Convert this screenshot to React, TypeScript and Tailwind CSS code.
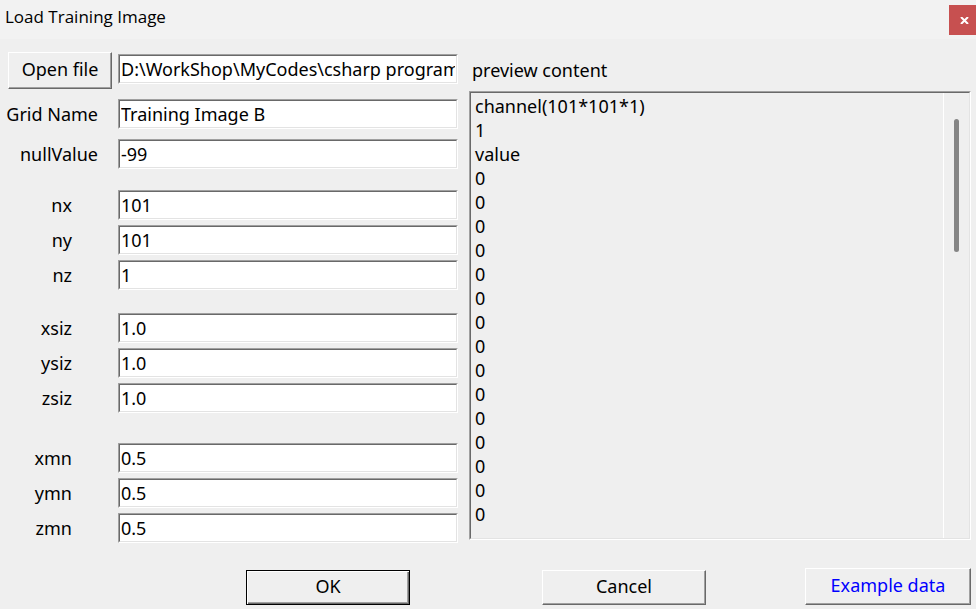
import type { ReactNode } from "react";

const RAISED =
  "border border-t-white border-l-white border-r-[#696969] border-b-[#696969] pb-[3px] shadow-[inset_-1px_-1px_0_#a0a0a0]";
const SUNKEN =
  "border border-t-[#a0a0a0] border-l-[#a0a0a0] border-r-white border-b-white";

type FieldProps = {
  id: string;
  label: string;
  value: string;
  wide?: boolean;
};

function TextBox({ id, value, label }: { id: string; value: string; label?: string }) {
  return (
    <span className={`block h-[30px] min-w-0 flex-1 ${SUNKEN}`}>
      <input
        id={id}
        aria-label={label}
        defaultValue={value}
        className="block h-full w-full border border-t-[#696969] border-r-[#e3e3e3] border-b-[#e3e3e3] border-l-[#696969] bg-white px-px outline-none"
      />
    </span>
  );
}

function Field({ id, label, value, wide }: FieldProps) {
  return (
    <div className="flex items-center">
      <label
        htmlFor={id}
        className={`w-[118px] shrink-0 text-right ${wide ? "pr-5" : "pr-[46px]"}`}
      >
        {label}
      </label>
      <TextBox id={id} value={value} />
    </div>
  );
}

function Group({ children }: { children: ReactNode }) {
  return <div className="flex flex-col gap-[5px]">{children}</div>;
}

const previewText = ["channel(101*101*1)", "1", "value", ...Array<string>(15).fill("0")].join("\n");

export default function App() {
  return (
    <div className="min-h-screen bg-[#efefef] font-['Noto_Sans','Open_Sans',sans-serif] text-[18px] leading-6 text-black">
      <header className="flex h-[39px] items-start justify-between bg-[#f2f2f2]">
        <h1 className="pt-[5px] pl-[5px] font-['Open_Sans','Noto_Sans',sans-serif] text-[17px]">
          Load Training Image
        </h1>
        <button
          type="button"
          aria-label="Close"
          className="mt-[5px] flex h-[30px] w-[27px] items-center justify-center bg-[#c75050] pl-1"
        >
          <svg width="9" height="7" viewBox="0 0 9 7" aria-hidden="true">
            <path d="M1 0 L8 7 M8 0 L1 7" stroke="white" strokeWidth="2" fill="none" />
          </svg>
        </button>
      </header>

      <main>
        <div className="grid grid-cols-[458fr_502fr] gap-x-[11px] pt-[13px] pr-[5px]">
          <form className="flex min-w-0 flex-col">
            <div className="flex items-start">
              <button type="button" className={`mr-[6px] ml-2 h-[37px] w-[104px] shrink-0 ${RAISED}`}>
                Open file
              </button>
              <div className="flex min-w-0 flex-1 pt-[2px]">
                <TextBox
                  id="path"
                  label="Training image file"
                  value="D:\WorkShop\MyCodes\csharp program"
                />
              </div>
            </div>
            <div className="mt-[10px] mb-[21px] flex flex-col gap-[10px]">
              <Field id="grid" label="Grid Name" value="Training Image B" wide />
              <Field id="null" label="nullValue" value="-99" wide />
            </div>
            <Group>
              <Field id="nx" label="nx" value="101" />
              <Field id="ny" label="ny" value="101" />
              <Field id="nz" label="nz" value="1" />
            </Group>
            <div className="mt-[23px] mb-[30px]">
              <Group>
                <Field id="xsiz" label="xsiz" value="1.0" />
                <Field id="ysiz" label="ysiz" value="1.0" />
                <Field id="zsiz" label="zsiz" value="1.0" />
              </Group>
            </div>
            <Group>
              <Field id="xmn" label="xmn" value="0.5" />
              <Field id="ymn" label="ymn" value="0.5" />
              <Field id="zmn" label="zmn" value="0.5" />
            </Group>
          </form>

          <section className="flex min-w-0 flex-col pb-[3px]">
            <label htmlFor="preview" className="mb-[9px] pt-[6px] pl-[3px]">
              preview content
            </label>
            <div className={`flex flex-1 ${SUNKEN}`}>
              <div className="flex flex-1 border border-t-[#696969] border-r-[#e3e3e3] border-b-[#e3e3e3] border-l-[#696969]">
                <textarea
                  id="preview"
                  readOnly
                  value={previewText}
                  className="block min-w-0 flex-1 resize-none overflow-hidden bg-transparent px-1 pt-px outline-none"
                />
                <div className="w-[26px] border-l border-white pt-[26px] pl-[10px]">
                  <div className="h-[133px] w-[5px] rounded-full bg-[#858585]" />
                </div>
              </div>
            </div>
          </section>
        </div>

        <footer className="grid grid-cols-[458fr_502fr] gap-x-[11px] pt-[25px] pr-[5px] pb-1">
          <div className="flex items-end justify-end pr-12">
            <button
              type="button"
              className="h-[35px] w-[164px] border border-black pb-[3px] shadow-[inset_1px_1px_0_white,inset_-1px_-1px_0_#696969,inset_-2px_-2px_0_#a0a0a0]"
            >
              OK
            </button>
          </div>
          <div className="flex items-end justify-between pl-[73px]">
            <button type="button" className={`h-[35px] w-[164px] ${RAISED}`}>
              Cancel
            </button>
            <button type="button" className={`h-[37px] w-[166px] text-[#0000ff] ${RAISED}`}>
              Example data
            </button>
          </div>
        </footer>
      </main>
    </div>
  );
}
